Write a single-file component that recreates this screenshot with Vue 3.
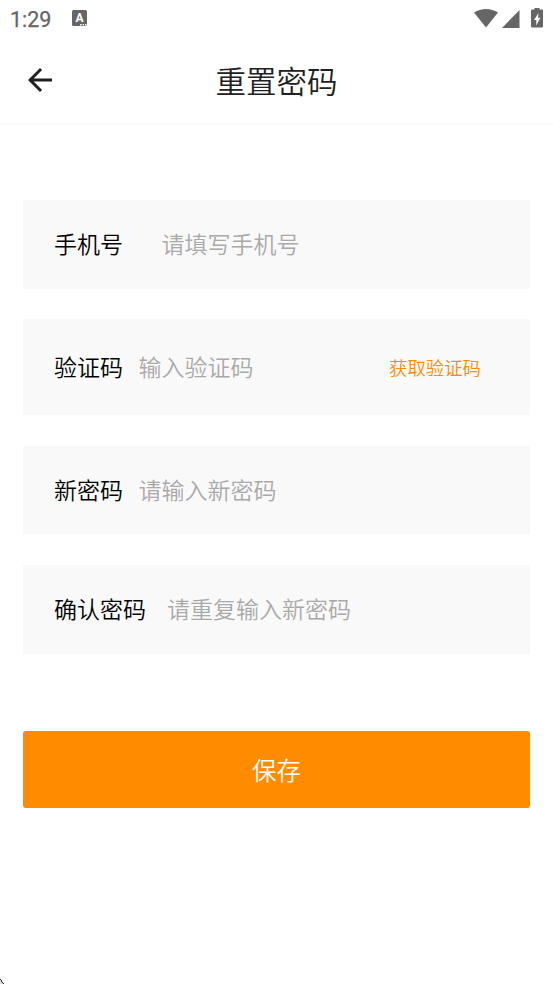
<script setup>
import { reactive } from 'vue'

const fields = reactive([
  { key: 'phone', label: '手机号', hint: '请填写手机号', type: 'tel', value: '' },
  { key: 'code', label: '验证码', hint: '输入验证码', type: 'text', value: '', action: '获取验证码' },
  { key: 'password', label: '新密码', hint: '请输入新密码', type: 'text', value: '' },
  { key: 'confirm', label: '确认密码', hint: '请重复输入新密码', type: 'text', value: '' },
])
</script>

<template>
  <div class="screen">
    <div class="status">
      <span class="time">1:29</span>
      <div class="app-badge">
        <span class="badge-letter">A</span>
        <svg class="badge-dots" width="7" height="2" viewBox="0 0 7 2">
          <path d="M0 0h1.5v1.5H0ZM2.5 0h1.5v1.5H2.5ZM5 0h1.5v1.5H5Z" fill="#fff" />
        </svg>
      </div>
      <div class="signals">
        <svg class="wifi" width="24" height="19" viewBox="0 0 24 19">
          <path d="M0 3.6C7-1.2 17-1.2 24 3.6L12 18.5Z" fill="#666" />
        </svg>
        <svg class="cell" width="18" height="18" viewBox="0 0 18 18">
          <path d="M0 18L17.5 0V18Z" fill="#666" />
        </svg>
        <svg class="battery" width="12" height="20" viewBox="0 0 12 20">
          <path d="M3.5 0h5v1.5H11a1 1 0 0 1 1 1v16a1 1 0 0 1-1 1H1a1 1 0 0 1-1-1V2.5a1 1 0 0 1 1-1h2.5Z" fill="#666" />
          <path d="M7.5 5L3 12h2.3v5.5L9.4 9.8H7Z" fill="#fff" />
        </svg>
      </div>
    </div>

    <header class="header">
      <button class="back" aria-label="返回">
        <svg width="24" height="24" viewBox="0 0 24 24">
          <path d="M24 10.5H5.7L14.1 2.1L12 0L0 12L12 24L14.1 21.9L5.7 13.5H24Z" fill="#212121" />
        </svg>
      </button>
      <h1 class="title">重置密码</h1>
    </header>

    <form class="form" @submit.prevent>
      <div v-for="f in fields" :key="f.key" class="field" :class="f.key">
        <label class="label" :for="f.key">{{ f.label }}</label>
        <input :id="f.key" v-model="f.value" class="input" :type="f.type" :placeholder="f.hint" />
        <button v-if="f.action" type="button" class="get-code">{{ f.action }}</button>
      </div>
      <button class="save" type="submit">保存</button>
    </form>

    <svg class="corner" width="4" height="5" viewBox="0 0 4 5">
      <path d="M0 1L4 5H0Z" fill="#ddd" />
      <path d="M0 0h1v1h1v2h1v1h1v1H3V4H2V3H1V1H0Z" fill="#222" />
    </svg>
  </div>
</template>

<style>
body {
  background: #fff;
}
</style>

<style scoped>
.screen {
  position: relative;
  box-sizing: border-box;
  height: 984px;
  overflow: hidden;
  background: #fff;
  font-family: "Noto Sans CJK SC", sans-serif;
  font-weight: 350;
  color: #000;
}
button,
input {
  margin: 0;
  padding: 0;
  border: 0;
  background: none;
  font-family: inherit;
  font-weight: inherit;
}
svg {
  display: block;
}
.status {
  display: flex;
  align-items: flex-start;
  height: 37px;
  padding: 0 10px;
}
.time {
  width: 62px;
  margin-top: 7px;
  font: 400 21.5px/25px Roboto, sans-serif;
  color: #666;
  -webkit-text-stroke: 0.25px #666;
}
.app-badge {
  position: relative;
  width: 15px;
  height: 16px;
  margin-top: 10px;
  border-radius: 1.5px;
  background: #666;
  text-align: center;
}
.badge-letter {
  display: block;
  font: 700 12px/17px Roboto, sans-serif;
  color: #fff;
}
.badge-dots {
  position: absolute;
  right: 0.5px;
  bottom: 0.5px;
}
.signals {
  display: flex;
  align-items: flex-start;
  margin-left: auto;
}
.wifi {
  margin-top: 9px;
}
.cell {
  margin: 10px 11px 0 4px;
}
.battery {
  margin-top: 8px;
}
.header {
  display: grid;
  grid-template-columns: 56px 1fr 56px;
  align-items: center;
  box-sizing: border-box;
  height: 88px;
  border-bottom: 2px solid #fafafa;
}
.back {
  padding-left: 28px;
}
.title {
  margin: 0;
  text-align: center;
  font-size: 30.5px;
  line-height: 44px;
  font-weight: 350;
  color: #212121;
}
.form {
  display: flex;
  flex-direction: column;
  padding: 75px 23px 0;
}
.field {
  display: flex;
  align-items: center;
  box-sizing: border-box;
  height: 88.5px;
  margin-bottom: 30.7px;
  padding: 0 49px 2px 31px;
  background: #f9f9f9;
}
.field.code {
  height: 96px;
}
.label {
  flex: none;
  margin-right: 15.5px;
  font-size: 23px;
  line-height: 34px;
}
.phone .label {
  margin-right: 38.4px;
}
.confirm .label {
  margin-right: 21px;
}
.input {
  flex: 1;
  min-width: 0;
  height: 34px;
  outline: none;
  font-size: 23px;
  line-height: 34px;
}
.input::placeholder {
  color: #a9a9a9;
  opacity: 1;
}
.get-code {
  flex: none;
  margin-top: 2px;
  font-size: 18.4px;
  line-height: 28px;
  color: #ff8c00;
}
.save {
  height: 77px;
  margin-top: 46.6px;
  padding-top: 1px;
  border-radius: 3px;
  background: #ff8c00;
  color: #fff;
  font-size: 24.5px;
  line-height: 36px;
}
.corner {
  position: absolute;
  left: 0;
  bottom: 0;
}
</style>
